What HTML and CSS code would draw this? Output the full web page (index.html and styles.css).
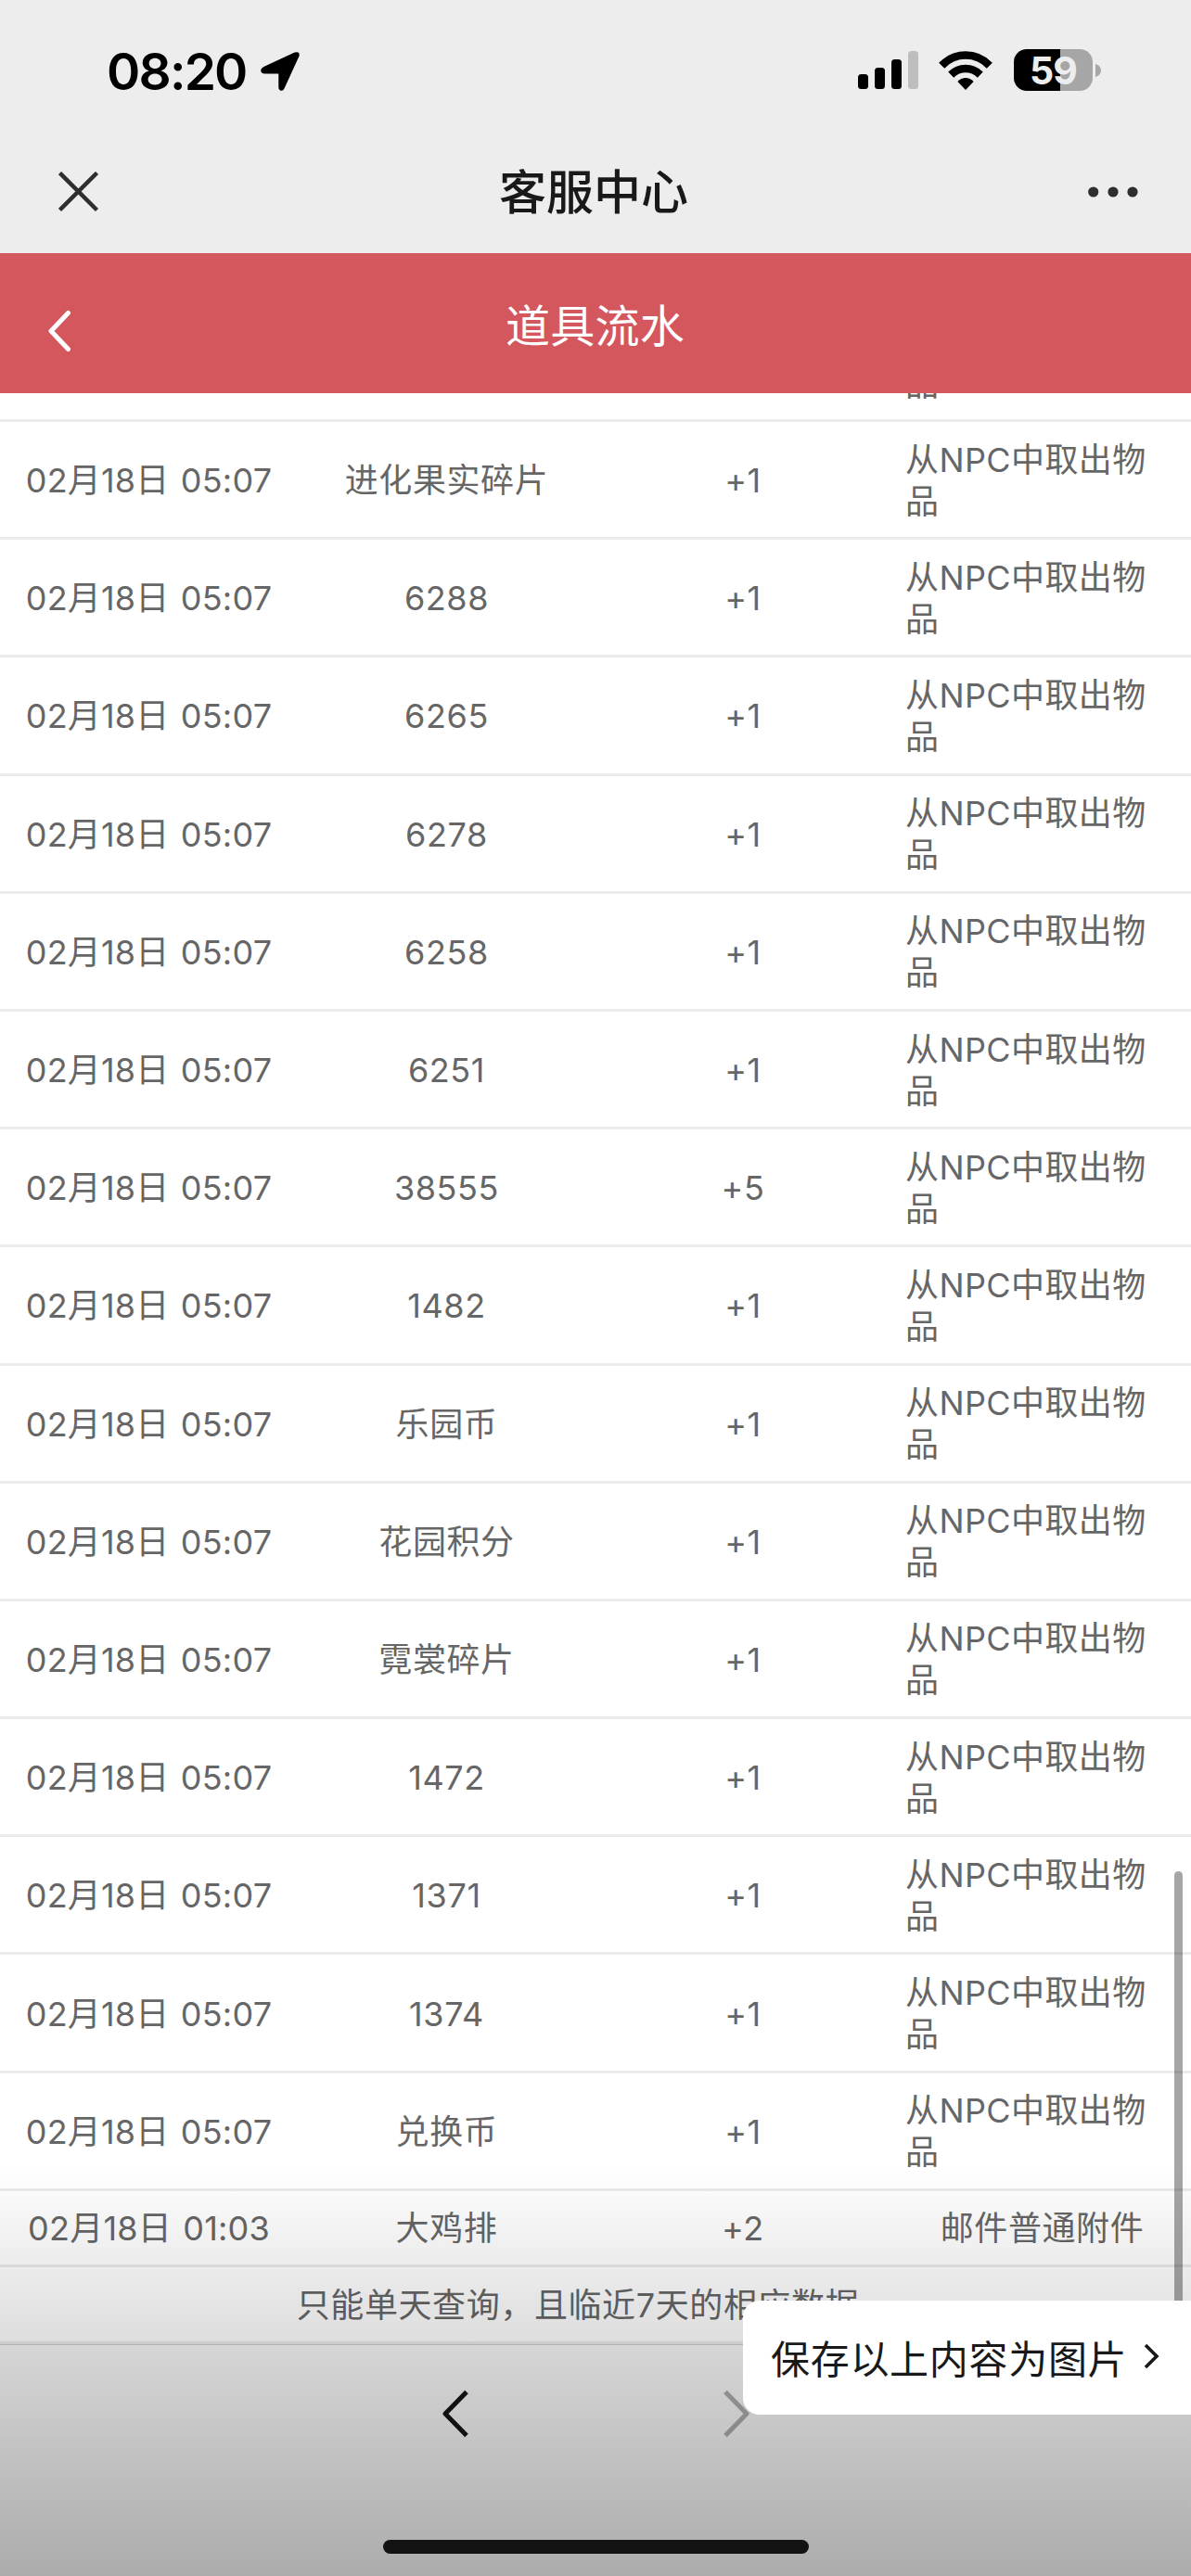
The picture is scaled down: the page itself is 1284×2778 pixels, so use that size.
FILE: index.html
```html
<!DOCTYPE html>
<html lang="zh-CN">
<head>
<meta charset="utf-8">
<title>客服中心</title>
<link rel="stylesheet" href="styles.css">
</head>
<body>
<div class="screen">
  <header class="status">
    <div class="clock"><span class="time">08:20</span>
      <svg class="locate" width="42" height="42" viewBox="0 0 42 42"><path d="M3.800 15.800 36.600.6q5.800-1.800 5 3.600L25.600 39.200q-1.600 3.600-4.600 2.300-1.700-.8-1.700-3.300V23.500H4.300Q.9 23.500.3 20.800-.1 17.600 3.800 15.800Z" fill="#000"/></svg>
    </div>
    <div class="indicators">
      <svg width="65" height="41" viewBox="0 0 65 41"><rect y="25" width="11" height="16" rx="3.500"/><rect x="18" y="18" width="11" height="23" rx="3.500"/><rect x="36" y="9" width="11" height="32" rx="3.500"/><rect x="54" width="11" height="41" rx="3.500" fill="#bebebe"/></svg>
      <svg class="wifi" width="58" height="42" viewBox="0 0 58 42"><g fill="none" stroke="#000" stroke-width="8.500"><path d="M3.200 15.700Q14 4.600 29 4.600t25.800 11.100"/><path d="M13.200 25.600Q20 19 29 19t15.800 6.600"/></g><path d="M29 42 20.400 33Q24 29 29 29t8.600 4Z"/></svg>
      <div class="battery"><span>59</span></div>
      <svg class="nub" width="6" height="14" viewBox="0 0 6 14"><path d="M0 0Q6 2 6 7T0 14Z" fill="#a6a6a6"/></svg>
    </div>
  </header>
  <nav class="topbar">
    <svg width="44" height="44" viewBox="0 0 44 44"><path d="M1.500 1.500 41.500 41.500M41.500 1.500 1.500 41.500" stroke="#2e2e2e" stroke-width="4.500"/></svg>
    <h1>客服中心</h1>
    <svg width="54" height="12" viewBox="0 0 54 12" fill="#2e2e2e"><circle cx="5.700" cy="6" r="5.600"/><circle cx="27" cy="6" r="5.600"/><circle cx="48" cy="6" r="5.600"/></svg>
  </nav>
  <div class="banner">
    <svg width="26" height="46" viewBox="0 0 26 46"><path d="M22.500 3.500 4 23 22.500 42.500" fill="none" stroke="#fff" stroke-width="5" stroke-linecap="round" stroke-linejoin="round"/></svg>
    <h2>道具流水</h2>
  </div>
  <main class="list">
    <div class="row partial"><span class="source">品</span></div>
    <div class="row"><span class="date">02月18日 05:07</span><span>进化果实碎片</span><span class="count">+1</span><span class="source">从NPC中取出物品</span></div>
    <div class="row"><span class="date">02月18日 05:07</span><span>6288</span><span class="count">+1</span><span class="source">从NPC中取出物品</span></div>
    <div class="row"><span class="date">02月18日 05:07</span><span>6265</span><span class="count">+1</span><span class="source">从NPC中取出物品</span></div>
    <div class="row"><span class="date">02月18日 05:07</span><span>6278</span><span class="count">+1</span><span class="source">从NPC中取出物品</span></div>
    <div class="row"><span class="date">02月18日 05:07</span><span>6258</span><span class="count">+1</span><span class="source">从NPC中取出物品</span></div>
    <div class="row"><span class="date">02月18日 05:07</span><span>6251</span><span class="count">+1</span><span class="source">从NPC中取出物品</span></div>
    <div class="row"><span class="date">02月18日 05:07</span><span>38555</span><span class="count">+5</span><span class="source">从NPC中取出物品</span></div>
    <div class="row"><span class="date">02月18日 05:07</span><span>1482</span><span class="count">+1</span><span class="source">从NPC中取出物品</span></div>
    <div class="row"><span class="date">02月18日 05:07</span><span>乐园币</span><span class="count">+1</span><span class="source">从NPC中取出物品</span></div>
    <div class="row"><span class="date">02月18日 05:07</span><span>花园积分</span><span class="count">+1</span><span class="source">从NPC中取出物品</span></div>
    <div class="row"><span class="date">02月18日 05:07</span><span>霓裳碎片</span><span class="count">+1</span><span class="source">从NPC中取出物品</span></div>
    <div class="row"><span class="date">02月18日 05:07</span><span>1472</span><span class="count">+1</span><span class="source">从NPC中取出物品</span></div>
    <div class="row"><span class="date">02月18日 05:07</span><span>1371</span><span class="count">+1</span><span class="source">从NPC中取出物品</span></div>
    <div class="row"><span class="date">02月18日 05:07</span><span>1374</span><span class="count">+1</span><span class="source">从NPC中取出物品</span></div>
    <div class="row"><span class="date">02月18日 05:07</span><span>兑换币</span><span class="count">+1</span><span class="source">从NPC中取出物品</span></div>
    <div class="row single"><span class="date">02月18日 01:03</span><span>大鸡排</span><span class="count">+2</span><span>邮件普通附件</span></div>
    <div class="row note">只能单天查询，且临近7天的相应数据</div>
  </main>
  <footer class="toolbar">
    <svg width="28" height="52" viewBox="0 0 28 52"><path d="M26 2.500 3 26 26 49.500" fill="none" stroke="#151515" stroke-width="5" stroke-linejoin="round"/></svg>
    <svg width="28" height="52" viewBox="0 0 28 52"><path d="M2 2.500 25 26 2 49.500" fill="none" stroke="#acacac" stroke-width="5" stroke-linejoin="round"/></svg>
  </footer>
  <div class="scrollbar"></div>
  <div class="shade"></div>
  <div class="save"><span>保存以上内容为图片</span><svg width="17" height="28" viewBox="0 0 17 28"><path d="M2 2 14 14 2 26" fill="none" stroke="#191919" stroke-width="3.600"/></svg></div>
  <div class="home"></div>
</div>
</body>
</html>
```
FILE: styles.css
```css
* { box-sizing: border-box; }
body { margin: 0; font-family: Inter, "Noto Sans CJK SC", sans-serif; }
h1, h2 { margin: 0; }
svg { display: block; flex: none; }
.screen {
  position: relative;
  display: flex;
  flex-direction: column;
  width: 1284px;
  height: 2778px;
  overflow: hidden;
  background: #fff;
}
.status {
  display: flex;
  justify-content: space-between;
  height: 141px;
  padding: 47px 97px 0 115px;
  background: #ededed;
}
.clock { display: flex; width: 208px; height: 60px; align-items: center; justify-content: space-between; }
.time { font-size: 55px; font-weight: 600; line-height: 60px; letter-spacing: -1.8px; }
.indicators { display: flex; height: 57px; align-items: center; }
.wifi { margin-left: 22px; }
.battery {
  width: 85px;
  height: 45px;
  margin-left: 23px;
  border-radius: 14px;
  background: linear-gradient(90deg, #000 50px, #a6a6a6 50px);
  color: #ededed;
  font-size: 41px;
  font-weight: 700;
  line-height: 46px;
  text-align: center;
  letter-spacing: -1px;
}
.nub { margin-left: 3px; }
.topbar {
  display: flex;
  align-items: center;
  justify-content: space-between;
  height: 132px;
  padding: 0 57px 0 63px;
  background: #ededed;
}
.topbar h1 { padding-top: 2px; font-size: 51px; font-weight: 500; line-height: 60px; color: #191919; }
.banner {
  display: grid;
  grid-template-columns: 1fr auto 1fr;
  align-items: center;
  height: 151px;
  padding-left: 51px;
  padding-right: 51px;
  background: #d4575e;
}
.banner svg { margin-top: 16px; }
.banner h2 { padding: 6px 1px 0 0; font-size: 48px; font-weight: 400; line-height: 60px; letter-spacing: .2px; color: #fff; }
.list { height: 2104px; flex: none; color: #666; font-size: 36px; line-height: 45px; letter-spacing: .6px; }
.row {
  display: grid;
  grid-template-columns: repeat(4, 321px);
  align-items: center;
  height: 127.2px;
  padding-top: 3px;
  border-bottom: 3px solid #ebebed;
  text-align: center;
}
.row .date { letter-spacing: .2px; word-spacing: 2px; }
.row .count { padding-right: 3px; }
.row .source { padding: 0 40px 0 13px; text-align: left; letter-spacing: .4px; }
.partial {
  display: flex;
  align-items: flex-end;
  height: 31px;
  padding: 0 0 15px 963px;
  overflow: hidden;
}
.single { height: 82px; }
.note { display: block; height: 83px; padding: 19px 38px 0 0; }
.toolbar {
  display: flex;
  justify-content: center;
  gap: 275px;
  flex: 1;
  padding-top: 48px;
  border-top: 1px solid #cecece;
  background: #f7f7f7;
}
.scrollbar {
  position: absolute;
  top: 2018px;
  right: 9px;
  width: 9px;
  height: 500px;
  border-radius: 5px;
  background: rgba(0, 0, 0, .35);
}
.shade {
  position: absolute;
  top: 2333px;
  left: 0;
  right: 0;
  bottom: 0;
  background: linear-gradient(rgba(0, 0, 0, 0), rgba(0, 0, 0, .305));
}
.save {
  position: absolute;
  top: 2481px;
  right: 0;
  display: flex;
  align-items: center;
  gap: 18px;
  width: 483px;
  height: 123px;
  padding: 0 0 3px 30px;
  border-radius: 18px 0 0 18px;
  background: #fff;
  color: #191919;
  font-size: 42px;
  letter-spacing: .7px;
}
.home {
  position: absolute;
  top: 2739px;
  left: 413px;
  width: 459px;
  height: 15px;
  border-radius: 8px;
  background: #131313;
}
```
